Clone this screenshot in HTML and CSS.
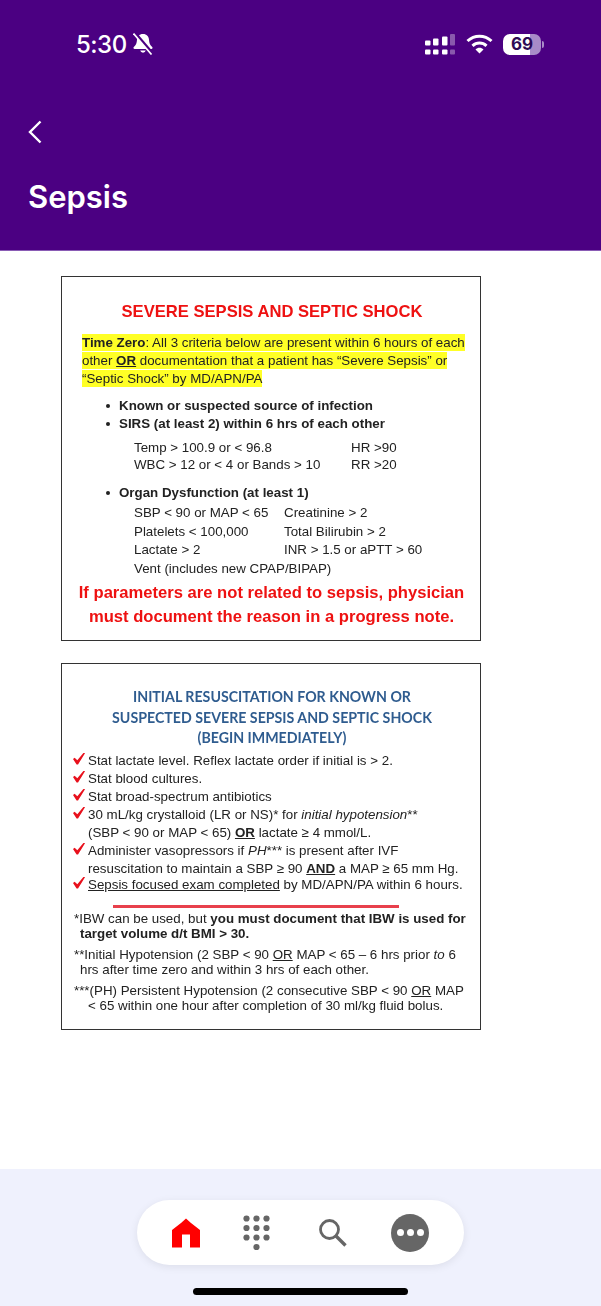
FILE: index.html
```html
<!DOCTYPE html>
<html lang="en">
<head>
  <meta charset="UTF-8">
  <meta name="viewport" content="width=device-width, initial-scale=1.0">
  <title>Sepsis</title>
  <link rel="stylesheet" href="styles.css">
</head>
<body>
<div class="page">

  <header class="header">
    <div class="status">
      <div class="status-left">
        <span class="time">5:30</span>
        <svg class="bell" width="20" height="22" viewBox="0 0 20 22">
          <path d="M10 1c-3.800 0-5.800 2.500-6 5.800-.2 3.400-1 5.300-3.200 7.300-.7.700-.3 2 .8 2h16.800c1.100 0 1.500-1.300.8-2-2.200-2-3-3.900-3.200-7.300C15.800 3.500 13.800 1 10 1z" fill="#fff"/>
          <path d="M7.200 17.500a2.900 2.900 0 0 0 5.600 0z" fill="#fff"/>
          <path d="M2 0l18 21" stroke="#4b0082" stroke-width="3"/>
          <path d="M.5 .5l18 21" stroke="#fff" stroke-width="1.700"/>
        </svg>
      </div>
      <div class="status-right">
        <svg width="30" height="21" viewBox="0 0 30 21" fill="#fff">
          <rect x="0" y="6.500" width="5.500" height="5" rx="1"/>
          <rect x="8" y="4.500" width="5.500" height="7" rx="1"/>
          <rect x="17" y="2.500" width="5.500" height="9" rx="1"/>
          <rect x="25" y="0" width="5" height="11.500" rx="1" opacity=".35"/>
          <rect x="0" y="15.500" width="5.500" height="5" rx="1"/>
          <rect x="8" y="15.500" width="5.500" height="5" rx="1"/>
          <rect x="17" y="15.500" width="5.500" height="5" rx="1"/>
          <rect x="25" y="15.500" width="5" height="5" rx="1" opacity=".35"/>
        </svg>
        <svg class="wifi" width="27" height="20" viewBox="0 0 27 20" fill="none" stroke="#fff" stroke-width="3">
          <path d="M1.500 7C8.500 .5 18.500 .5 25.500 7"/>
          <path d="M6.500 11.800C10.500 8 16.500 8 20.500 11.800"/>
          <path d="M13.500 19.500L9.500 15.500C11.800 13.300 15.200 13.300 17.500 15.500z" fill="#fff" stroke="none"/>
        </svg>
        <div class="battery"><span class="battery-num">69</span></div>
        <div class="battery-nub"></div>
      </div>
    </div>
    <div class="back">
      <svg width="14" height="24" viewBox="0 0 14 24" fill="none" stroke="#fff" stroke-width="2.400">
        <path d="M12.500 1.500L2 12l10.500 10.500"/>
      </svg>
    </div>
    <h1 class="title">Sepsis</h1>
  </header>

  <main class="content">
    <section class="doc doc-one">
      <h2 class="doc-red-title">SEVERE SEPSIS AND SEPTIC SHOCK</h2>
      <p class="highlight">
        <span><b>Time Zero</b>: All 3 criteria below are present within 6 hours of each</span><br>
        <span>other <b class="u">OR</b> documentation that a patient has “Severe Sepsis” or</span><br>
        <span>“Septic Shock” by MD/APN/PA</span>
      </p>
      <ul class="bullets first">
        <li>Known or suspected source of infection</li>
        <li>SIRS (at least 2) within 6 hrs of each other</li>
      </ul>
      <div class="grid sirs">
        <span>Temp &gt; 100.9 or &lt; 96.8</span><span>HR &gt;90</span>
        <span>WBC &gt; 12 or &lt; 4 or Bands &gt; 10</span><span>RR &gt;20</span>
      </div>
      <ul class="bullets second">
        <li>Organ Dysfunction (at least 1)</li>
      </ul>
      <div class="grid organ">
        <span>SBP &lt; 90 or MAP &lt; 65</span><span>Creatinine &gt; 2</span>
        <span>Platelets &lt; 100,000</span><span>Total Bilirubin &gt; 2</span>
        <span>Lactate &gt; 2</span><span>INR &gt; 1.5 or aPTT &gt; 60</span>
        <span class="wide">Vent (includes new CPAP/BIPAP)</span>
      </div>
      <p class="warning">If parameters are not related to sepsis, physician<br>must document the reason in a progress note.</p>
    </section>

    <section class="doc doc-two">
      <h2 class="doc-blue-title">INITIAL RESUSCITATION FOR KNOWN OR<br>SUSPECTED SEVERE SEPSIS AND SEPTIC SHOCK<br>(BEGIN IMMEDIATELY)</h2>
      <ul class="checks">
        <li>Stat lactate level. Reflex lactate order if initial is &gt; 2.</li>
        <li>Stat blood cultures.</li>
        <li>Stat broad-spectrum antibiotics</li>
        <li>30 mL/kg crystalloid (LR or NS)* for <i>initial hypotension</i>**<br>(SBP &lt; 90 or MAP &lt; 65) <b class="u">OR</b> lactate ≥ 4 mmol/L.</li>
        <li>Administer vasopressors if <i>PH</i>*** is present after IVF<br>resuscitation to maintain a SBP ≥ 90 <b class="u">AND</b> a MAP ≥ 65 mm Hg.</li>
        <li><span class="u">Sepsis focused exam completed</span> by MD/APN/PA within 6 hours.</li>
      </ul>
      <div class="red-rule"></div>
      <p class="note note-a">*IBW can be used, but <b>you must document that IBW is used for</b><br><b class="in-a">target volume d/t BMI &gt; 30.</b></p>
      <p class="note note-b">**Initial Hypotension (2 SBP &lt; 90 <span class="u">OR</span> MAP &lt; 65 – 6 hrs prior <i>to</i> 6<br><span class="in-a">hrs after time zero and within 3 hrs of each other.</span></p>
      <p class="note note-c">***(PH) Persistent Hypotension (2 consecutive SBP &lt; 90 <span class="u">OR</span> MAP<br><span class="in-c">&lt; 65 within one hour after completion of 30 ml/kg fluid bolus.</span></p>
    </section>
  </main>

  <footer class="tabbar">
    <nav class="pill">
      <svg width="28" height="30" viewBox="0 0 28 30"><path d="M14 .5l5 4.500L28 12v17.500H18V16.500h-8v13H0V12l9-7z" fill="#f00"/></svg>
      <svg width="27" height="36" viewBox="0 0 27 36" fill="#666">
        <circle cx="3.500" cy="3.500" r="3.100"/><circle cx="13.500" cy="3.500" r="3.100"/><circle cx="23.500" cy="3.500" r="3.100"/>
        <circle cx="3.500" cy="13" r="3.100"/><circle cx="13.500" cy="13" r="3.100"/><circle cx="23.500" cy="13" r="3.100"/>
        <circle cx="3.500" cy="22.500" r="3.100"/><circle cx="13.500" cy="22.500" r="3.100"/><circle cx="23.500" cy="22.500" r="3.100"/>
        <circle cx="13.500" cy="32" r="3.100"/>
      </svg>
      <svg class="search" width="29" height="29" viewBox="0 0 29 29" fill="none" stroke="#666" stroke-width="2.800">
        <circle cx="11.500" cy="11.500" r="9"/><path d="M18 18l9.500 9.500" stroke-width="3.400"/>
      </svg>
      <div class="more"><i></i><i></i><i></i></div>
    </nav>
    <div class="home-bar"></div>
  </footer>
</div>
</body>
</html>
```

FILE: styles.css
```css
body {
  margin: 0;
  font-family: 'Liberation Sans', Arial, sans-serif;
  background: #fff;
}
.page {
  height: 1306px;
  display: flex;
  flex-direction: column;
  overflow: hidden;
}

/* purple header */
.header {
  background: #4b0082;
  color: #fff;
  height: 250px;
  border-bottom: 1px solid #8a5cb5;
  font-family: Inter, sans-serif;
}
.status {
  height: 88px;
  display: flex;
  justify-content: space-between;
  align-items: center;
  padding: 0 57px 0 76px;
}
.status-left { display: flex; align-items: center; gap: 6px; }
.time { font-size: 24px; font-weight: 500; letter-spacing: -0.5px; }
.status-right { display: flex; align-items: center; }
.wifi { margin-left: 11px; }
.battery {
  margin-left: 10px;
  width: 38px;
  height: 21px;
  border-radius: 7px;
  background: linear-gradient(90deg, #fff 71%, #a88bc8 71%);
  display: flex;
  align-items: center;
  justify-content: center;
}
.battery-num { font-size: 17px; font-weight: 700; color: #2d0a55; }
.battery-nub { width: 2px; height: 7px; margin-left: 1px; background: #a88bc8; border-radius: 0 2px 2px 0; }
.back { height: 44px; margin-top: 22px; padding-left: 28px; display: flex; align-items: center; }
.title { margin: 21px 0 0 28px; font-size: 31px; line-height: 44px; font-weight: 600; }

/* scanned documents */
.content {
  flex: 1;
  padding: 25px 0 0 61px;
  display: flex;
  flex-direction: column;
  gap: 22px;
}
.doc {
  box-sizing: border-box;
  width: 420px;
  border: 1px solid #333;
  color: #222;
  font-size: 13.330px;
  line-height: 18px;
  filter: blur(0.3px);
}
.doc-one { height: 365px; padding: 25px 15px 0 20px; }
.doc-two { height: 367px; padding: 23px 10px 0 26px; }
.doc-red-title {
  margin: 0 0 12px -3px;
  text-align: center;
  font-size: 16.600px;
  line-height: 20px;
  font-weight: 700;
  color: #ee1111;
}
.highlight { margin: 0; }
.highlight span { background: #ffff26; padding: 1px 0; }
.u { text-decoration: underline; }
.bullets { margin: 0; padding: 0 0 0 37px; list-style: none; font-weight: 700; }
.bullets li { position: relative; }
.bullets li::before {
  content: '';
  position: absolute;
  left: -13px;
  top: 7px;
  width: 4px;
  height: 4px;
  border-radius: 50%;
  background: #222;
}
.first { margin-top: 9px; }
.second { margin-top: 11px; }
.grid { display: grid; padding-left: 52px; }
.sirs { grid-template-columns: 217px auto; grid-auto-rows: 17px; margin-top: 6px; line-height: 17px; }
.organ { grid-template-columns: 150px auto; grid-auto-rows: 18.700px; margin-top: 1px; line-height: 19px; }
.wide { grid-column: 1 / 3; }
.warning {
  margin: 3px 0 0 -4px;
  text-align: center;
  font-size: 16.600px;
  line-height: 24px;
  font-weight: 700;
  color: #ee1111;
}
.doc-blue-title {
  margin: 0 0 0 -14px;
  text-align: center;
  font-family: Lato, sans-serif;
  font-size: 14.200px;
  line-height: 20.500px;
  font-weight: 700;
  color: #2f5c8f;
}
.checks { margin: 3px 0 0; padding: 0; list-style: none; }
.checks li { position: relative; }
.checks li:last-child { margin-top: -2px; }
.checks li::before {
  content: '';
  position: absolute;
  left: -15px;
  top: 1px;
  width: 12px;
  height: 12px;
  background: #e8101c;
  clip-path: polygon(0 55%, 14% 44%, 36% 64%, 90% 0, 100% 6%, 42% 100%, 30% 100%);
}
.red-rule { height: 3px; width: 286px; margin: 11px 0 0 25px; background: #e8404c; }
.note { margin: 0 0 0 -14px; line-height: 15.500px; }
.note-a { margin-top: 3px; }
.note-b { margin-top: 5px; }
.note-c { margin-top: 5px; }
.in-a { margin-left: 6px; }
.in-c { margin-left: 14px; }

/* bottom tabs */
.tabbar {
  height: 137px;
  background: #eff1fd;
  display: flex;
  flex-direction: column;
  align-items: center;
}
.pill {
  box-sizing: border-box;
  width: 327px;
  height: 65px;
  margin-top: 31px;
  padding-left: 35px;
  background: #fff;
  border-radius: 33px;
  box-shadow: 0 2px 8px rgba(0, 0, 0, 0.08);
  display: flex;
  align-items: center;
  gap: 44px;
}
.pill svg:nth-child(2) { margin-left: -1px; }
.search { margin-left: 4px; }
.more {
  width: 38px;
  height: 38px;
  border-radius: 50%;
  background: #666;
  display: flex;
  align-items: center;
  justify-content: center;
  gap: 3px;
}
.more i { width: 7px; height: 7px; border-radius: 50%; background: #fff; }
.home-bar { width: 215px; height: 7px; margin-top: 23px; border-radius: 4px; background: #000; }
```
